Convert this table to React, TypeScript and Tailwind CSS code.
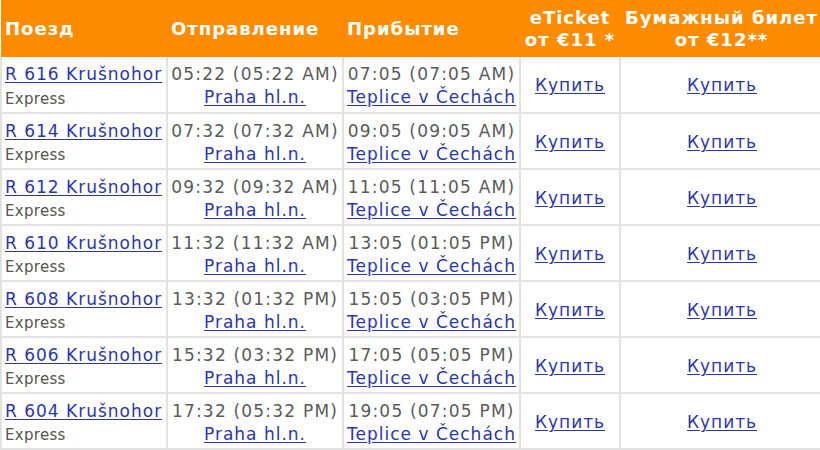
import React from 'react';

type Train = {
  name: string;
  dep: string;
  arr: string;
};

const trains: Train[] = [
  { name: 'R 616 Krušnohor', dep: '05:22 (05:22 AM)', arr: '07:05 (07:05 AM)' },
  { name: 'R 614 Krušnohor', dep: '07:32 (07:32 AM)', arr: '09:05 (09:05 AM)' },
  { name: 'R 612 Krušnohor', dep: '09:32 (09:32 AM)', arr: '11:05 (11:05 AM)' },
  { name: 'R 610 Krušnohor', dep: '11:32 (11:32 AM)', arr: '13:05 (01:05 PM)' },
  { name: 'R 608 Krušnohor', dep: '13:32 (01:32 PM)', arr: '15:05 (03:05 PM)' },
  { name: 'R 606 Krušnohor', dep: '15:32 (03:32 PM)', arr: '17:05 (05:05 PM)' },
  { name: 'R 604 Krušnohor', dep: '17:32 (05:32 PM)', arr: '19:05 (07:05 PM)' },
];

const link = 'text-[#2a35b0] underline underline-offset-2';

export default function App() {
  return (
    <div className="w-[820px] h-[450px] overflow-hidden bg-white font-['DejaVu_Sans',Verdana,sans-serif]">
      <table className="w-[822px] table-fixed">
        <colgroup>
          <col className="w-[166px]" />
          <col className="w-[176px]" />
          <col className="w-[177px]" />
          <col className="w-[100px]" />
          <col className="w-[203px]" />
        </colgroup>
        <thead>
          <tr className="bg-[#ff8c00] text-white h-[57px] text-[18px] tracking-[1px] font-bold leading-[22px]">
            <th className="text-left align-middle px-[4px]">Поезд</th>
            <th className="text-left align-middle px-[4px]">Отправление</th>
            <th className="text-left align-middle px-[4px]">Прибытие</th>
            <th className="text-center align-middle whitespace-nowrap">
              eTicket
              <br />
              от €11 *
            </th>
            <th className="text-center align-middle whitespace-nowrap">
              Бумажный билет
              <br />
              от €12**
            </th>
          </tr>
        </thead>
        <tbody>
          {trains.map(t => (
            <tr key={t.name} className="h-[56px] border-b-2 border-[#e2e2e2] text-[17px] tracking-[1px]">
              <td className="border-x-2 border-[#e2e2e2] px-[3px] pt-[3px] align-middle whitespace-nowrap">
                <a href="#" className={`${link} leading-[24px]`}>
                  {t.name}
                </a>
                <div className="text-[15px] tracking-[0.3px] leading-[22px] text-[#555]">Express</div>
              </td>
              <td className="border-r-2 border-[#e2e2e2] pt-[3px] text-center align-middle leading-[23px] whitespace-nowrap">
                <div className="text-[#5a5a5a] tracking-[1.2px]">{t.dep}</div>
                <a href="#" className={link}>
                  Praha hl.n.
                </a>
              </td>
              <td className="border-r-2 border-[#e2e2e2] pt-[3px] text-center align-middle leading-[23px] whitespace-nowrap">
                <div className="text-[#5a5a5a] tracking-[1.2px]">{t.arr}</div>
                <a href="#" className={link}>
                  Teplice v Čechách
                </a>
              </td>
              <td className="border-r-2 border-[#e2e2e2] pt-[3px] text-center align-middle">
                <a href="#" className={link}>
                  Купить
                </a>
              </td>
              <td className="pt-[3px] text-center align-middle">
                <a href="#" className={link}>
                  Купить
                </a>
              </td>
            </tr>
          ))}
        </tbody>
      </table>
    </div>
  );
}
